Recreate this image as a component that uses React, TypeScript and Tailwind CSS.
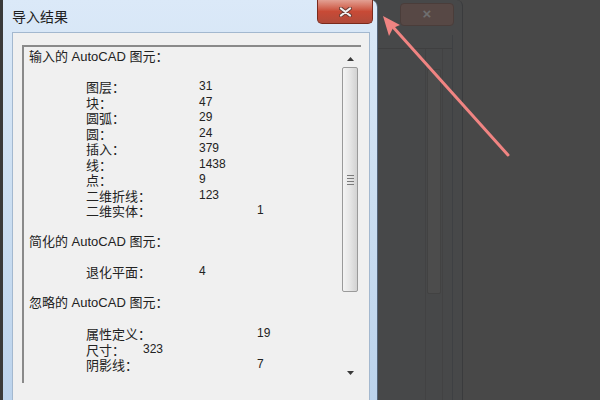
import React from "react";

type Row = { label: string; value: string; at: number };

const inputRows: Row[] = [
  { label: "图层：", value: "31", at: 113 },
  { label: "块：", value: "47", at: 113 },
  { label: "圆弧：", value: "29", at: 113 },
  { label: "圆：", value: "24", at: 113 },
  { label: "插入：", value: "379", at: 113 },
  { label: "线：", value: "1438", at: 113 },
  { label: "点：", value: "9", at: 113 },
  { label: "二维折线：", value: "123", at: 113 },
  { label: "二维实体：", value: "1", at: 171 },
];

const simplifiedRows: Row[] = [{ label: "退化平面：", value: "4", at: 113 }];

const ignoredRows: Row[] = [
  { label: "属性定义：", value: "19", at: 171 },
  { label: "尺寸：", value: "323", at: 57 },
  { label: "阴影线：", value: "7", at: 171 },
];

function Rows({ rows }: { rows: Row[] }) {
  return (
    <div className="pl-[57px]">
      {rows.map((r) => (
        <div key={r.label} className="relative h-[15.5px] leading-[15.5px]">
          <span className="text-[13px]">{r.label}</span>
          <span className="absolute top-0 text-[12px]" style={{ left: r.at }}>
            {r.value}
          </span>
        </div>
      ))}
    </div>
  );
}

function CloseButton() {
  return (
    <div className="w-[56px] h-[24px] rounded-b-[5px] border border-t-0 border-[#7a2a1c] bg-gradient-to-b from-[#e2a093] via-[#c84a36] to-[#b04a3a] flex items-center justify-center">
      <svg width="13" height="10" viewBox="0 0 13 10">
        <path d="M2 1.5 L11 8.5 M11 1.5 L2 8.5" stroke="#6a3a32" strokeWidth="4" strokeLinecap="round" />
        <path d="M2 1.5 L11 8.5 M11 1.5 L2 8.5" stroke="#f2f2f2" strokeWidth="2.2" strokeLinecap="round" />
      </svg>
    </div>
  );
}

function Scrollbar() {
  return (
    <div className="w-[16px] mr-[3px] mt-[3px] mb-[2px] flex flex-col items-center">
      <div className="h-[17px] flex items-center justify-center">
        <svg width="7" height="4" viewBox="0 0 7 4">
          <path d="M0 4 L3.5 0 L7 4 Z" fill="#3a3a3a" />
        </svg>
      </div>
      <div className="w-[16px] h-[225px] rounded-[2px] border border-[#9a9a9a] bg-gradient-to-r from-[#f4f4f4] via-[#e6e6e6] to-[#d2d2d2] flex flex-col items-center justify-center gap-[2px]">
        <div className="w-[7px] h-px bg-[#7a7a7a]" />
        <div className="w-[7px] h-px bg-[#7a7a7a]" />
        <div className="w-[7px] h-px bg-[#7a7a7a]" />
        <div className="w-[7px] h-px bg-[#7a7a7a]" />
      </div>
      <div className="flex-1" />
      <div className="h-[17px] flex items-center justify-center">
        <svg width="7" height="4" viewBox="0 0 7 4">
          <path d="M0 0 L7 0 L3.5 4 Z" fill="#3a3a3a" />
        </svg>
      </div>
    </div>
  );
}

export default function App() {
  return (
    <div className="w-[600px] h-[400px] bg-[#484848] relative overflow-hidden flex font-['Liberation_Sans','Noto_Sans_CJK_SC',sans-serif] text-[#222222]">
      <div className="w-[3px] bg-[#3a3a3a]" />

      {/* dialog */}
      <div className="w-[375px] h-full flex flex-col rounded-tr-[7px] bg-gradient-to-b from-[#dbe9f8] via-[#cbdef1] to-[#bcd3ec] border-r border-[#55657a]">
        <div className="h-[32px] flex items-start justify-between pl-[9px] pr-[4px]">
          <span className="mt-[8px] text-[14px] leading-[18px] text-[#1e1e1e]">导入结果</span>
          <CloseButton />
        </div>
        <div className="flex-1 ml-[9px] mr-[7px] bg-[#f0f0f0] border-t border-l border-r border-[#a3b8cf] pt-[12px] pl-[9px] pr-[8px]">
          <div className="h-[338px] border-t-2 border-l-2 border-[#8a8a8a] flex">
            <div className="flex-1 pl-[5px] pt-[2px]">
              <div className="h-[15.5px] leading-[15.5px] text-[13px]">输入的 AutoCAD 图元：</div>
              <div className="mt-[14.5px]">
                <Rows rows={inputRows} />
              </div>
              <div className="mt-[15.5px] h-[15.5px] leading-[15.5px] text-[13px]">简化的 AutoCAD 图元：</div>
              <div className="mt-[14.5px]">
                <Rows rows={simplifiedRows} />
              </div>
              <div className="mt-[15.5px] h-[15.5px] leading-[15.5px] text-[13px]">忽略的 AutoCAD 图元：</div>
              <div className="mt-[15.5px]">
                <Rows rows={ignoredRows} />
              </div>
            </div>
            <Scrollbar />
          </div>
        </div>
      </div>

      {/* window behind, dimmed */}
      <div className="w-[85px] h-full flex flex-col border-r border-[#3a3b3d] rounded-tr-[6px] bg-[#474849]">
        <div className="h-[35px] flex items-start pl-[22px] pt-[3px]">
          <div className="w-[54px] h-[23px] rounded-[4px] bg-[#574845] border border-[#4a3d3a] flex items-center justify-center text-[#6f6f6f] text-[15px] font-bold">
            ×
          </div>
        </div>
        <div className="flex-1 flex pr-[9px]">
          <div className="flex-1 flex flex-col">
            <div className="h-[13px]" />
            <div className="flex-1 flex border-t border-[#3f3f40]">
              <div className="w-[47px]" />
              <div className="w-[18px] border-l border-r border-[#424243] flex flex-col items-center pt-[2px]">
                <div className="w-[14px] h-[225px] mt-[18px] rounded-[2px] bg-[#4c4c4c] border border-[#424242]" />
              </div>
            </div>
          </div>
          <div className="w-px bg-[#3e4043]" />
        </div>
      </div>

      {/* annotation arrow */}
      <svg className="absolute inset-0 pointer-events-none" width="600" height="400" viewBox="0 0 600 400">
        <line x1="393" y1="27" x2="508" y2="155" stroke="#f08482" strokeWidth="3" strokeLinecap="round" />
        <path d="M383 16 L400 25 L393 28 L389 36 Z" fill="#f08482" />
      </svg>
    </div>
  );
}
